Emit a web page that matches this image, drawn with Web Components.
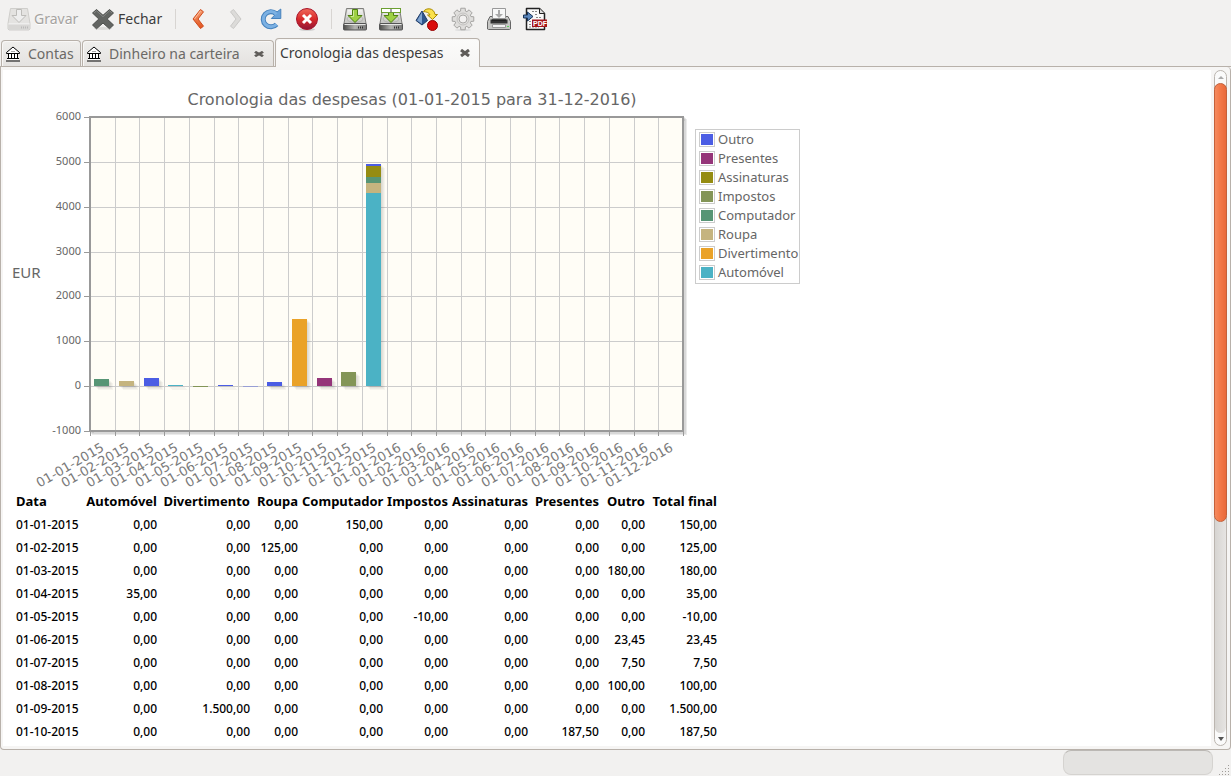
<!DOCTYPE html>
<html lang="pt">
<head>
<meta charset="utf-8">
<title>Cronologia das despesas</title>
<style>
  html, body { height: 100%; margin: 0; }
  body { font: 15px/20px "Noto Sans", "Open Sans", sans-serif; color: #3c3c3c; background: #f2f1f0; overflow: hidden; }
</style>
</head>
<body>
<ledger-app></ledger-app>

<script>
const make = (name, markup, extra) => {
  const template = document.createElement('template');
  template.innerHTML = markup;
  customElements.define(name, class extends HTMLElement {
    connectedCallback() {
      if (this.shadowRoot) return;
      const root = this.attachShadow({ mode: 'open' });
      root.append(template.content.cloneNode(true));
      if (extra) extra(this, root);
    }
  });
};

/* ---------- icons ---------- */
const disk = (top) => `
  <path d="M3.500 1.500h17l2.500 15H1z" fill="#c9c9c6" stroke="#80807d" stroke-linejoin="round"/>
  <path d="M4.500 2.500h15l2 13h-19z" fill="url(#g)"/>
  <ellipse cx="12" cy="12" rx="8" ry="3.500" fill="none" stroke="#b3b3b0"/>
  <rect x=".5" y="16.500" width="23" height="6.500" rx="1" fill="url(#k)" stroke="#555"/>
  <path d="M1.500 17.500h21" stroke="#e6e6e4"/><path d="M15 20.500h6" stroke="#333" stroke-width="2" stroke-dasharray="1 1"/>${top}`;
const grad = `<defs><linearGradient id="g" x2="0" y2="1"><stop stop-color="#f4f4f2"/><stop offset="1" stop-color="#c4c4c1"/></linearGradient>
  <linearGradient id="k" x2="1" y2="0"><stop stop-color="#4c4c4a"/><stop offset=".5" stop-color="#b5b5b2"/><stop offset="1" stop-color="#777"/></linearGradient>
  <linearGradient id="o" x2="0" y2="1"><stop stop-color="#f9a074"/><stop offset="1" stop-color="#e0521c"/></linearGradient>
  <linearGradient id="r" x2="0" y2="1"><stop stop-color="#f06a5c"/><stop offset=".5" stop-color="#d92a2a"/><stop offset="1" stop-color="#8e1537"/></linearGradient></defs>`;
const cog = (() => {
  let d = '';
  for (let i = 0; i < 8; i++) {
    [[-.3, 8.3], [-.2, 11], [.2, 11], [.3, 8.3]].forEach(([o, r]) => {
      const a = i * Math.PI / 4 + o;
      d += `${d ? 'L' : 'M'}${(12 + r * Math.sin(a)).toFixed(2)} ${(12 - r * Math.cos(a)).toFixed(2)}`;
    });
  }
  return d + 'z';
})();
const ICONS = {
  saveoff: `<path d="M3.500 1.500h17l2.500 15V22l-1 1H2l-1-1v-5.500z" fill="#e4e3e1" stroke="#cfcecb" stroke-linejoin="round"/><path d="M1.500 17h21" stroke="#f8f8f8"/>
    <rect x="1.500" y="17.500" width="21" height="5" rx="1" fill="#d8d7d5"/><path d="M14 20.500h7" stroke="#bbb" stroke-dasharray="1 1" stroke-width="2"/>
    <path d="M9.500 2.500h5v6H19l-7 7-7-7h4.500z" fill="#eee" stroke="#bdbcb9"/>`,
  close: `<ellipse cx="12" cy="21.500" rx="9" ry="1.500" fill="#dcdbd9"/><path d="M5.500 2.500 12 8.300l6.500-5.800L22.500 6l-6.300 6 6.300 6-4 3.800-6.500-5.800-6.500 5.800L1.500 18l6.300-6-6.300-6z" fill="#636562" stroke="#4b4d4a" stroke-linejoin="round"/><path d="m3 6 2.500-2.200L12 9.700l6.500-5.900L21 6" fill="none" stroke="#848684"/>`,
  back: `<path d="M13.500 2.500 6 12l7.500 9.500 3-2.300L11 12l5.500-7.200z" fill="url(#o)" stroke="#cf4a1b" stroke-linejoin="round"/><path d="M13.500 4 7.500 12" stroke="#fcc0a0"/>`,
  forward: `<path d="M10.500 2.500 18 12l-7.500 9.500-3-2.300L13 12 7.500 4.800z" fill="#dcdbd9" stroke="#cac9c7" stroke-linejoin="round"/>`,
  reload: `<path d="M17.500 17.300A7.600 7.600 0 1 1 17 6.700" fill="none" stroke="#4682bd" stroke-width="5"/><path d="M21.800 2v9.500h-9.500l3-3L13.500 6l4.500-1z" fill="#69a2da" stroke="#4682bd" stroke-linejoin="round"/><path d="M17.500 17.300A7.600 7.600 0 1 1 17.500 7" fill="none" stroke="#7cb1e3" stroke-width="3"/>`,
  stop: `<ellipse cx="12" cy="22.500" rx="8" ry="1.300" fill="#ccc"/><circle cx="12" cy="12" r="10.500" fill="url(#r)" stroke="#a9152b"/><path d="M8 8l8 8M16 8l-8 8" stroke="#fff" stroke-width="3"/>`,
  save: disk(`<path d="M9.500 2.500h5v6H19l-7 7-7-7h4.500z" fill="#9ed044" stroke="#4f8110"/><path d="M10.500 3.500v6H8" fill="none" stroke="#cbea96"/>`),
  saveas: disk(`<path d="M9.500 5h5v3.500H19l-7 7-7-7h4.500z" fill="#9ed044" stroke="#4f8110"/><rect x="2.500" y="1.500" width="19" height="4" fill="#fff" stroke="#6b9f31"/><path d="M12 2v3" stroke="#444"/>`),
  actions: `<path d="M7 4 1 13.500 7 18l5.500-4.500z" fill="#2f568d" stroke="#1f3b66" stroke-linejoin="round"/><path d="M7 5v12l-5-3.600z" fill="#7fa3cf"/><path d="M8.500 4.500C11 .5 19 .5 20 7.500h2.500L17.500 12.500 12.500 8H15c-1-3-4-3-6.500-3.500z" fill="#fbe14b" stroke="#a98a00" stroke-linejoin="round"/><circle cx="17.500" cy="18.500" r="5" fill="#da0c0c" stroke="#980000"/>`,
  gear: `<ellipse cx="12" cy="23" rx="8" ry="1" fill="#ddd"/><path d="${cog}" fill="#dfdedc" stroke="#a5a4a2" stroke-linejoin="round"/><circle cx="12" cy="12" r="6" fill="none" stroke="#c4c3c1"/><circle cx="12" cy="12" r="4" fill="#f2f1f0" stroke="#aaa9a7"/>`,
  print: `<path d="M3 9.500h18l2.500 5V22l-1 .5h-21l-1-.5v-7.500z" fill="#c6c6c4" stroke="#666"/><path d="M5.500 1.500h13v10h-13z" fill="#f8f8f8" stroke="#999"/><path d="M11 3h2v4h3l-4 4-4-4h3z" fill="#aaa"/><path d="M3.500 12.500h17v4h-17z" fill="#333"/><path d="M5 12.500h14v1H5z" fill="#111"/><path d="M5.500 17.500h13v3h-13z" fill="#f2f2f2" stroke="#999"/><path d="M20 19.500h2" stroke="#5bd15b"/>`,
  pdf: `<path d="M3.500 1.500h13l5 5v16h-18z" fill="#fafafa" stroke="#222" stroke-width="1.500" stroke-linejoin="round"/><path d="M16.500 1.500v5h5" fill="#ddd" stroke="#222"/><path d="M9 4.500h6M12 7.500h3M13 10.500h6M6 14.500h3M6 17.500h3M6 20h10" stroke="#888" stroke-dasharray="2 1"/><path d="M0 8h4V5l5.500 4.500L4 14v-3H0z" fill="#5b87bd" stroke="#173358" transform="translate(.5)"/><rect x="9" y="12.500" width="15" height="7.500" fill="#a5161c"/><text x="10" y="19" font-family="Liberation Sans" font-size="7" font-weight="700" fill="#fff">PDF</text>`,
};
make('tool-icon', `<style>:host{display:block;width:24px;height:24px;flex:none}svg{display:block}</style>`, (el, root) => {
  root.innerHTML += `<svg width="24" height="24" viewBox="0 0 24 24" aria-hidden="true">${grad}${ICONS[el.getAttribute('name')]}</svg>`;
});

/* ---------- toolbar ---------- */
make('tool-button', `
<style>
  :host { display: block; }
  button { display: flex; align-items: center; gap: 3px; height: 36px; width: 100%; padding: 0 6px; border: 0; background: none; font: inherit; color: inherit; white-space: nowrap; }
  :host([wide]) { width: 84px; }
  button:disabled { color: #a5a3a0; text-shadow: 0 1px #fff; }
</style>
<button type="button"><tool-icon></tool-icon><slot></slot></button>`, (el, root) => {
  const b = root.querySelector('button');
  root.querySelector('tool-icon').remove();
  b.insertAdjacentHTML('afterbegin', `<tool-icon name="${el.getAttribute('icon')}"></tool-icon>`);
  if (el.hasAttribute('off')) b.disabled = true;
  if (el.title) b.setAttribute('aria-label', el.title);
});
make('tool-separator', `<style>:host{display:block;flex:none;width:12px;height:20px;background:linear-gradient(#d8d5d2,#d8d5d2) 6px 0/1px 100% no-repeat}</style>`);
make('tool-bar', `<style>:host{display:flex;align-items:center;height:38px;padding-left:1px;font-size:14px;flex:none}</style><slot></slot>`);

/* ---------- tabs ---------- */
make('page-tab', `
<style>
  :host { display: block; height: 26px; box-sizing: border-box; border: 1px solid #b8b1aa; border-bottom: 0; border-radius: 4px 4px 0 0; background: linear-gradient(#efeeec, #e4e2e0); box-shadow: inset 1px 1px #f8f7f6; color: #6b6966; }
  :host([active]) { height: 29px; background: linear-gradient(#fbfbfa, #f6f5f4); color: #3c3c3c; margin-bottom: -1px; padding-bottom: 1px; }
  button { display: flex; align-items: center; width: 100%; height: 100%; padding: 0 5px 0 4px; border: 0; background: none; font: inherit; color: inherit; text-align: left; white-space: nowrap; }
  span { flex: 1; }
  svg { display: block; flex: none; }
  .bank { margin-right: 8px; }
  .x { margin-right: 4px; }
</style>
<button type="button" role="tab">
  <svg class="bank" width="14" height="16" viewBox="0 0 14 16" aria-hidden="true"><path d="M.5 6.500 7 1l6.500 5.500v1H.5z" fill="#fff" stroke="#000"/><path d="M2 8h10v5H2z" fill="#fff"/><path d="M2.500 8v5M5.500 8v5M8.500 8v5M11.500 8v5" stroke="#000"/><path d="M1 12.500h12M0 15h14" stroke="#000"/><path d="M1 13.500h12" stroke="#fff"/><path d="M5 5.500h4" stroke="#aaa"/></svg>
  <span><slot></slot></span>
  <svg class="x" width="10" height="8" viewBox="0 0 10 8" preserveAspectRatio="none" aria-hidden="true"><path d="M1 1l8 6M9 1 1 7" stroke="#5f5c59" stroke-width="3"/></svg>
</button>`, (el, root) => {
  const x = root.querySelector('.x');
  if (!el.hasAttribute('closable')) x.remove();
  if (el.hasAttribute('active')) root.querySelector('.bank').remove();
  else x.setAttribute('height', 6);
  root.querySelector('button').setAttribute('aria-selected', el.hasAttribute('active'));
});
make('tab-strip', `<style>:host{display:flex;align-items:flex-end;gap:1px;height:28px;padding-left:1px;border-bottom:1px solid #b8b1aa;font-size:14px;flex:none;position:relative}</style><slot></slot>`);

/* ---------- chart ---------- */
const SERIES = [['Outro', '#4b5de4'], ['Presentes', '#953579'], ['Assinaturas', '#958c12'], ['Impostos', '#839557'],
  ['Computador', '#579575'], ['Roupa', '#c5b47f'], ['Divertimento', '#eaa228'], ['Automóvel', '#4bb2c5']];
const COLOR = Object.fromEntries(SERIES);
/* per month: [series, amount] stacked from the zero line upwards */
const MONTHS = [
  [['Computador', 150]], [['Roupa', 125]], [['Outro', 180]], [['Automóvel', 35]], [['Impostos', -10]], [['Outro', 23.45]],
  [['Outro', 7.5]], [['Outro', 100]], [['Divertimento', 1500]], [['Presentes', 187.5]], [['Impostos', 310]],
  [['Automóvel', 4300], ['Roupa', 220], ['Computador', 140], ['Assinaturas', 250], ['Outro', 40]],
];
const pad = n => String(n).padStart(2, '0');

make('expense-chart', `
<style>
  :host { display: block; flex: none; }
  svg { display: block; font-family: "DejaVu Sans", sans-serif; fill: #666; }
  .tick { font: 11px "Noto Sans", "Open Sans", sans-serif; text-anchor: end; }
  .date { font-size: 13px; text-anchor: end; fill: #7a7a7a; }
  .title { font-size: 16px; text-anchor: middle; }
  .unit { font: 15px "Noto Sans", "Open Sans", sans-serif; }
</style>`, (el, root) => {
  const L = 78, T = 33, W = 593, H = 314, step = W / 24;
  const y = v => Math.round(T + H - (v + 1000) / 7000 * H);
  const x = i => Math.round(L + i * step);
  let s = '';
  for (let k = 1; k < 4; k++) s += `<rect x="${L + k}" y="${T + k}" width="${W}" height="${H}" fill="none" stroke="#000" stroke-opacity=".08" stroke-width="2"/>`;
  s += `<rect x="${L}" y="${T}" width="${W}" height="${H}" fill="#fffdf6"/>`;
  for (let v = -1000; v <= 6000; v += 1000) {
    if (v > -1000 && v < 6000) s += `<path d="M${L} ${y(v) + .5}h${W}" stroke="#ccc"/>`;
    s += `<path d="M${L - 6} ${y(v) + .5}h6" stroke="#999"/><text class="tick" x="${L - 9}" y="${y(v) + 3}">${v}</text>`;
  }
  for (let i = 0; i <= 24; i++) {
    if (i && i < 24) s += `<path d="M${x(i) + .5} ${T}v${H}" stroke="#ccc"/>`;
    s += `<path d="M${x(i) + .5} ${T + H}v5" stroke="#999"/>`;
  }
  MONTHS.forEach((parts, i) => {
    const bx = Math.round(L + (i + .5) * step - 8);
    let sum = 0;
    const total = parts.reduce((a, p) => a + p[1], 0), top = y(Math.max(total, 0));
    for (let k = 1; k < 5; k++) s += `<rect x="${bx + k}" y="${top + k}" width="15" height="${Math.max(y(0) - top, 0)}" fill="#000" opacity=".035"/>`;
    for (const [name, v] of parts) {
      const a = y(sum), b = y(sum + v);
      s += `<rect x="${bx}" y="${Math.min(a, b)}" width="15" height="${Math.max(Math.abs(a - b), 1)}" fill="${COLOR[name]}"${v === 7.5 ? ' opacity=".4"' : ''}/>`;
      sum += v;
    }
  });
  s += `<rect x="${L}" y="${T}" width="${W}" height="${H}" fill="none" stroke="#999" stroke-width="2"/>`;
  for (let i = 0; i < 24; i++)
    s += `<text class="date" transform="translate(${Math.round(L + (i + .5) * step + 3)} ${T + H + 19}) rotate(-30)">01-${pad(i % 12 + 1)}-${2015 + Math.floor(i / 12)}</text>`;
  root.innerHTML += `<svg width="680" height="406" role="img" aria-label="Cronologia das despesas">
    <text class="title" x="400" y="21">Cronologia das despesas (01-01-2015 para 31-12-2016)</text>
    <text class="unit" x="0" y="194">EUR</text>${s}</svg>`;
});

make('chart-legend', `
<style>
  :host { display: block; flex: none; }
  ul { list-style: none; margin: 0; padding: 0 3px 1px; width: 97px; border: 1px solid #ccc; font-size: 13px; line-height: 19px; color: #666; white-space: nowrap; }
  li { display: flex; align-items: center; gap: 3px; height: 19px; }
  i { flex: none; width: 12px; height: 11px; padding: 1px; border: 1px solid #ccc; background-clip: content-box; }
</style><ul></ul>`, (el, root) => {
  root.querySelector('ul').innerHTML = SERIES.map(([n, c]) => `<li><i style="background-color:${c}"></i>${n}</li>`).join('');
});

/* ---------- table ---------- */
const COLS = [['Data', 72], ['Automóvel', 77], ['Divertimento', 93], ['Roupa', 48], ['Computador', 85], ['Impostos', 65], ['Assinaturas', 80], ['Presentes', 71], ['Outro', 46], ['Total final', 72]];
const VALUES = [[4, '150,00'], [3, '125,00'], [8, '180,00'], [1, '35,00'], [5, '-10,00'], [8, '23,45'], [8, '7,50'], [8, '100,00'], [2, '1.500,00'], [7, '187,50']];
make('expense-table', `
<style>
  :host { display: block; }
  table { border-collapse: collapse; table-layout: fixed; width: 709px; font-size: 12px; line-height: 19px; color: #000; }
  th, td { height: 19px; padding: 2px 4px 2px 0; text-align: right; font-weight: 500; white-space: nowrap; }
  th { font-weight: 700; font-size: 13px; }
  th:first-child, td:first-child { text-align: left; padding-left: 4px; }
</style>
<table><colgroup></colgroup><thead><tr></tr></thead><tbody></tbody></table>`, (el, root) => {
  root.querySelector('colgroup').innerHTML = COLS.map(c => `<col style="width:${c[1]}px">`).join('');
  root.querySelector('thead tr').innerHTML = COLS.map(c => `<th scope="col">${c[0]}</th>`).join('');
  root.querySelector('tbody').innerHTML = VALUES.map(([col, amount], r) =>
    '<tr>' + COLS.map((c, i) => `<td>${i === 0 ? `01-${pad(r + 1)}-2015` : i === col || i === 9 ? amount : '0,00'}</td>`).join('') + '</tr>').join('');
});

/* ---------- page frame ---------- */
make('scroll-rail', `
<style>
  :host { display: flex; flex-direction: column; flex: none; width: 11px; border: 1px solid #bbb5af; border-radius: 7px; background: #fafafa; }
  .end { flex: none; height: 12px; display: grid; place-items: center; }
  .track { flex: 1; display: flex; flex-direction: column; background: linear-gradient(90deg, #d6d4d1, #e6e4e2); border-radius: 6px; }
  .thumb { flex: 27; margin: 0 -1px; box-sizing: border-box; border: 1px solid #c4603a; border-radius: 7px; background: linear-gradient(90deg, #f58a5e, #f37a4a 40%, #e9693a); }
  .rest { flex: 13; }
</style>
<div class="end"><svg width="6" height="3"><path d="M0 3 3 0l3 3z" fill="#aaa"/></svg></div>
<div class="track"><div class="thumb"></div><div class="rest"></div></div>
<div class="end"><svg width="6" height="4"><path d="M0 0h6L3 4z" fill="#555"/></svg></div>`);

make('report-view', `
<style>
  :host { display: flex; flex: 1; min-height: 0; box-sizing: border-box; padding: 3px 3px 3px 2px; border: 1px solid #b8b1aa; border-top: 0; border-radius: 0 4px 4px 4px; background: #f6f5f4; }
  main { flex: 1; min-width: 0; overflow: hidden; background: #fff; padding: 14px 9px 0; }
  .chart { display: flex; align-items: flex-start; gap: 3px; }
  chart-legend { margin-top: 45px; }
  scroll-rail { margin: 0 0 0 3px; }
</style>
<main>
  <div class="chart"><expense-chart></expense-chart><chart-legend></chart-legend></div>
  <expense-table></expense-table>
</main>
<scroll-rail></scroll-rail>`);

make('status-bar', `
<style>
  :host { display: flex; justify-content: flex-end; gap: 6px; height: 26px; flex: none; padding-right: 1px; }
  .meter { width: 150px; height: 25px; box-sizing: border-box; border: 1px solid #d5d3d0; border-top-color: #bbb8b4; border-radius: 8px; background: #e4e3e1; }
  svg { align-self: flex-end; }
</style>
<div class="meter"></div>
<svg width="11" height="12" aria-hidden="true"><path d="M9.500 1v11M6.500 4v8M3.500 7v5M.5 10v2" stroke="#a09c98" stroke-dasharray="1 2"/></svg>`);

make('ledger-app', `
<style>:host { display: flex; flex-direction: column; height: 100vh; }
  .first { width: 80px; } .second { width: 192px; } .third { width: 205px; }
</style>
<tool-bar role="toolbar">
  <tool-button icon="saveoff" wide off>Gravar</tool-button>
  <tool-button icon="close" wide>Fechar</tool-button>
  <tool-separator></tool-separator>
  <tool-button icon="back" title="Recuar"></tool-button>
  <tool-button icon="forward" title="Avançar" off></tool-button>
  <tool-button icon="reload" title="Recarregar"></tool-button>
  <tool-button icon="stop" title="Parar"></tool-button>
  <tool-separator></tool-separator>
  <tool-button icon="save" title="Gravar configuração"></tool-button>
  <tool-button icon="saveas" title="Gravar configuração como"></tool-button>
  <tool-button icon="actions" title="Opções"></tool-button>
  <tool-button icon="gear" title="Folhas de estilo"></tool-button>
  <tool-button icon="print" title="Imprimir"></tool-button>
  <tool-button icon="pdf" title="Exportar"></tool-button>
</tool-bar>
<tab-strip role="tablist">
  <page-tab class="first">Contas</page-tab>
  <page-tab class="second" closable>Dinheiro na carteira</page-tab>
  <page-tab class="third" active closable>Cronologia das despesas</page-tab>
</tab-strip>
<report-view></report-view>
<status-bar></status-bar>`);
</script>
</body>
</html>
